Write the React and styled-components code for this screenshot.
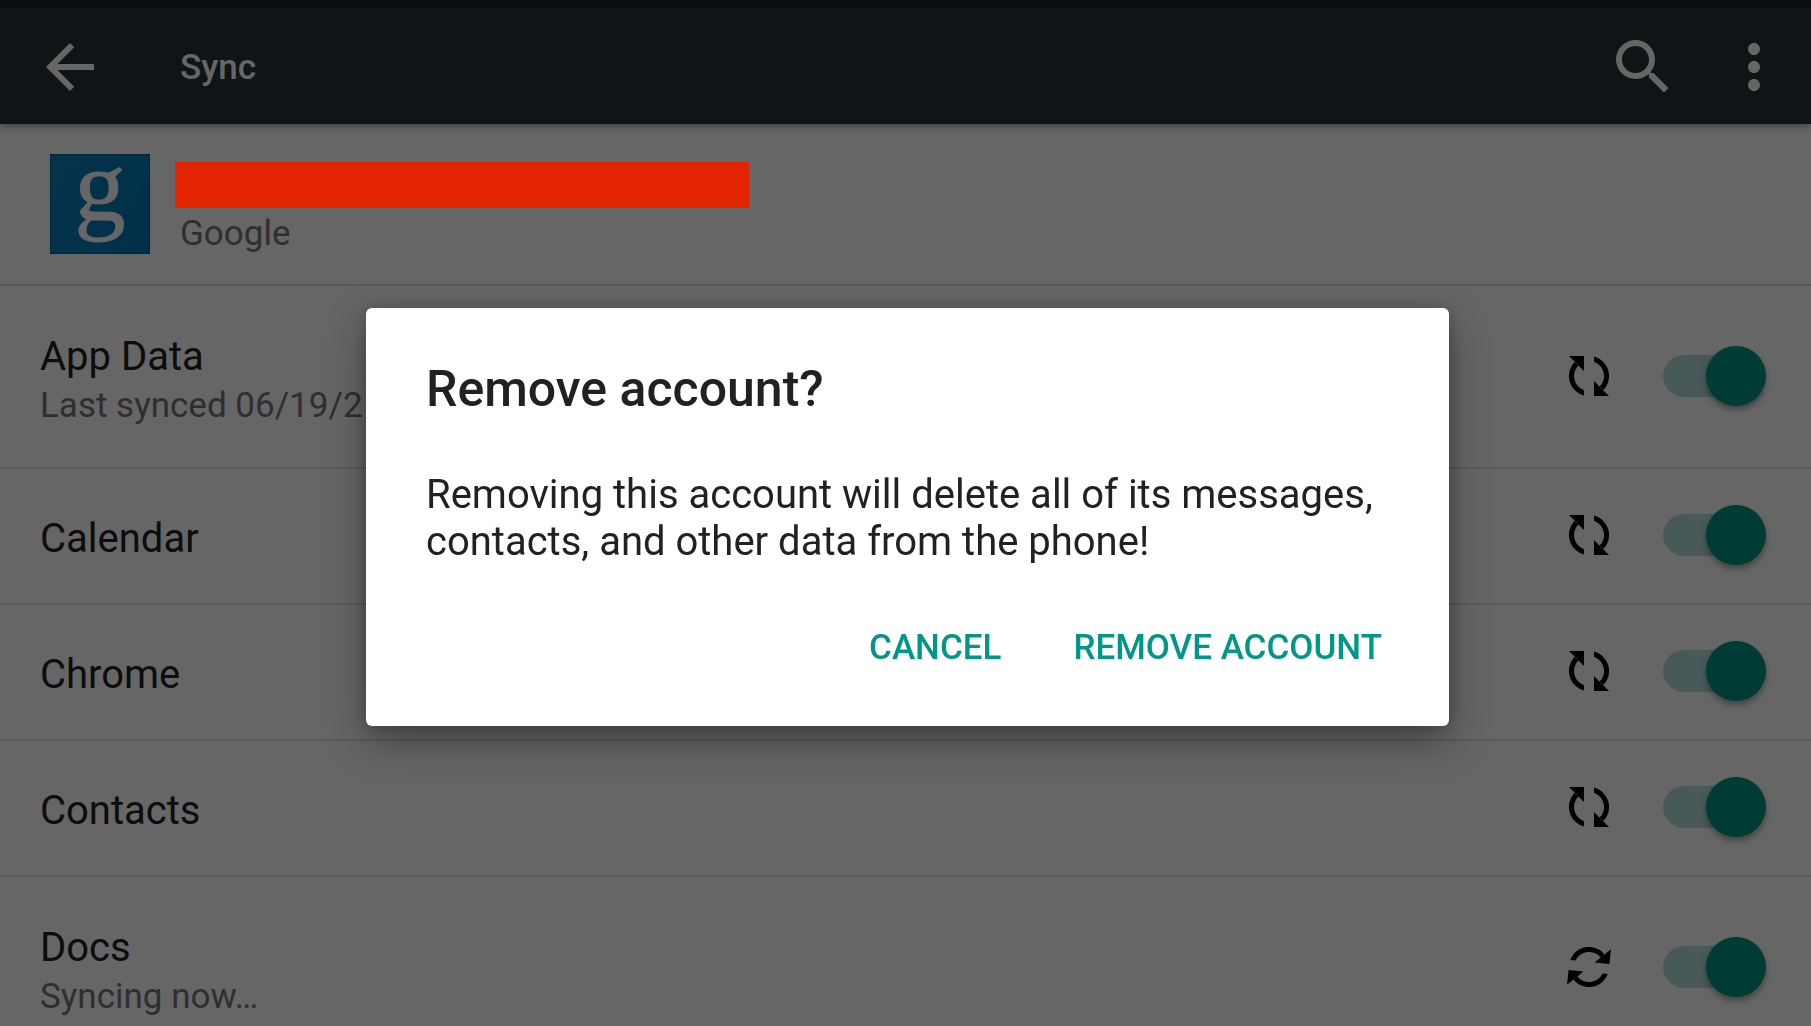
import { useState } from "react";
import styled, { createGlobalStyle } from "styled-components";
import { MdArrowBack, MdMoreVert, MdSearch } from "react-icons/md";

const GlobalStyle = createGlobalStyle`
  * {
    box-sizing: border-box;
  }
  body {
    margin: 0;
    height: 100vh;
    overflow: hidden;
    background: #fff;
    color: #212121;
    font-family: Roboto, "Noto Sans", sans-serif;
  }
`;

const StatusBar = styled.div`
  height: 8px;
  overflow: hidden;
  background: #1c2529;
`;

const Toolbar = styled.header`
  position: relative;
  display: flex;
  align-items: center;
  height: 116px;
  padding: 1px 21px 0 34px;
  background: #263238;
  color: #fff;
  box-shadow: 0 2px 8px rgba(0, 0, 0, 0.4);
`;

const ToolbarTitle = styled.h1`
  flex: 1;
  margin: 0 0 0 74px;
  padding-top: 2px;
  font-size: 35px;
  line-height: 41px;
  font-weight: 500;
`;

const IconButton = styled.button`
  display: flex;
  margin: 0 0 0 ${({ $gap }) => $gap || 0}px;
  padding: 0;
  border: 0;
  background: none;
  color: inherit;
  font-size: 72px;
`;

const Row = styled.div`
  display: flex;
  align-items: center;
  min-height: ${({ $tall }) => ($tall ? 183 : 136)}px;
  padding: 0 45px 2px 40px;
  border-bottom: 2px solid #e0e0e0;
`;

const AccountRow = styled(Row)`
  min-height: 162px;
  padding-left: 50px;
  padding-bottom: 0;
  gap: 30px;
`;

const AccountLogo = styled.div`
  flex: none;
  width: 100px;
  height: 100px;
  border: 1px solid #0a5a8c;
  background: linear-gradient(120deg, #0f80b8, #0078b8);
  color: #fff;
  font-family: "Liberation Serif", serif;
  font-size: 102px;
  line-height: 62px;
  text-align: center;
  -webkit-text-stroke: 1px #fff;
`;

const RowText = styled.div`
  flex: 1;
  display: flex;
  flex-direction: column;
  gap: 5px;
  padding-top: 7px;
`;

// sits above the scrim so the bar keeps its full colour
const HiddenAddress = styled.div`
  position: relative;
  z-index: 2;
  width: 574px;
  max-width: 100%;
  height: 46px;
  margin-left: -5px;
  background: #e32400;
`;

const RowTitle = styled.label`
  font-size: 40px;
  line-height: 47px;
`;

const RowSummary = styled.span`
  color: #757575;
  font-size: 35px;
  line-height: 41px;
`;

const SyncSvg = styled.svg`
  flex: none;
  width: 40px;
  height: 40px;
  margin-right: 54px;
  overflow: visible;
  color: #000;
  transform: rotate(${({ $active }) => ($active ? 96 : 0)}deg);
`;

const Switch = styled.input`
  appearance: none;
  display: flex;
  align-items: center;
  justify-content: flex-start;
  flex: none;
  width: 103px;
  height: 42px;
  margin: 0;
  border-radius: 21px;
  background: #d0d0d0;
  &::before {
    content: "";
    width: 60px;
    height: 60px;
    border-radius: 50%;
    background: #f1f1f1;
    box-shadow: 0 4px 6px rgba(0, 0, 0, 0.35);
  }
  &:checked {
    justify-content: flex-end;
    background: #b2dfdb;
  }
  &:checked::before {
    background: #009688;
  }
`;

const Scrim = styled.div`
  position: fixed;
  inset: 0;
  z-index: 1;
  background: rgba(0, 0, 0, 0.6);
`;

const DialogLayer = styled.div`
  position: fixed;
  inset: 0;
  z-index: 3;
  display: flex;
  align-items: center;
  justify-content: center;
  padding: 8px 0 0 4px;
`;

const Dialog = styled.section`
  width: 1083px;
  max-width: 90%;
  padding: 52px 43px 58px 60px;
  border-radius: 6px;
  background: #fff;
  box-shadow: 0 16px 40px rgba(0, 0, 0, 0.35), 0 0 16px rgba(0, 0, 0, 0.2);
`;

const DialogTitle = styled.h2`
  margin: 0 0 52px;
  font-size: 50px;
  line-height: 59px;
  font-weight: 500;
`;

const DialogText = styled.p`
  margin: 0;
  font-size: 40px;
  line-height: 47px;
`;

const DialogActions = styled.div`
  display: flex;
  justify-content: flex-end;
  gap: 24px;
  margin-top: 62px;
`;

const DialogButton = styled.button`
  padding: 0 24px;
  border: 0;
  background: none;
  color: #009688;
  font: 500 35px / 41px Roboto, sans-serif;
  text-transform: uppercase;
`;

const services = [
  { name: "App Data", summary: "Last synced 06/19/2" },
  { name: "Calendar" },
  { name: "Chrome" },
  { name: "Contacts" },
  { name: "Docs", summary: "Syncing now…", active: true },
];

const SyncIcon = ({ active }) => (
  <SyncSvg viewBox="0 0 40 40" $active={active} aria-hidden="true">
    {[0, 180].map((angle) => (
      <g key={angle} transform={`rotate(${angle} 20 20)`} fill="currentColor">
        <path d="M0 0H15V15Z" />
        <path d="M15 39.4A20 20 0 0 1 5.6 6.1L9.4 9.4A15 15 0 0 0 15 34.2Z" />
      </g>
    ))}
  </SyncSvg>
);

const ServiceRow = ({ name, summary, active }) => {
  const [checked, setChecked] = useState(true);
  const id = name.toLowerCase().replace(" ", "-");
  return (
    <Row $tall={Boolean(summary)}>
      <RowText>
        <RowTitle htmlFor={id}>{name}</RowTitle>
        {summary && <RowSummary>{summary}</RowSummary>}
      </RowText>
      <SyncIcon active={active} />
      <Switch
        id={id}
        type="checkbox"
        checked={checked}
        onChange={(e) => setChecked(e.target.checked)}
      />
    </Row>
  );
};

const App = () => {
  return (
    <>
      <GlobalStyle />
      <StatusBar />
      <Toolbar>
        <IconButton aria-label="Back">
          <MdArrowBack />
        </IconButton>
        <ToolbarTitle>Sync</ToolbarTitle>
        <IconButton aria-label="Search">
          <MdSearch />
        </IconButton>
        <IconButton aria-label="More options" $gap={39}>
          <MdMoreVert />
        </IconButton>
      </Toolbar>
      <main>
        <AccountRow>
          <AccountLogo>g</AccountLogo>
          <RowText>
            <HiddenAddress />
            <RowSummary>Google</RowSummary>
          </RowText>
        </AccountRow>
        {services.map((service) => (
          <ServiceRow key={service.name} {...service} />
        ))}
      </main>
      <Scrim />
      <DialogLayer>
        <Dialog role="alertdialog" aria-labelledby="dialog-title">
          <DialogTitle id="dialog-title">Remove account?</DialogTitle>
          <DialogText>
            Removing this account will delete all of its messages, contacts, and
            other data from the phone!
          </DialogText>
          <DialogActions>
            <DialogButton>Cancel</DialogButton>
            <DialogButton>Remove account</DialogButton>
          </DialogActions>
        </Dialog>
      </DialogLayer>
    </>
  );
};

export default App;
